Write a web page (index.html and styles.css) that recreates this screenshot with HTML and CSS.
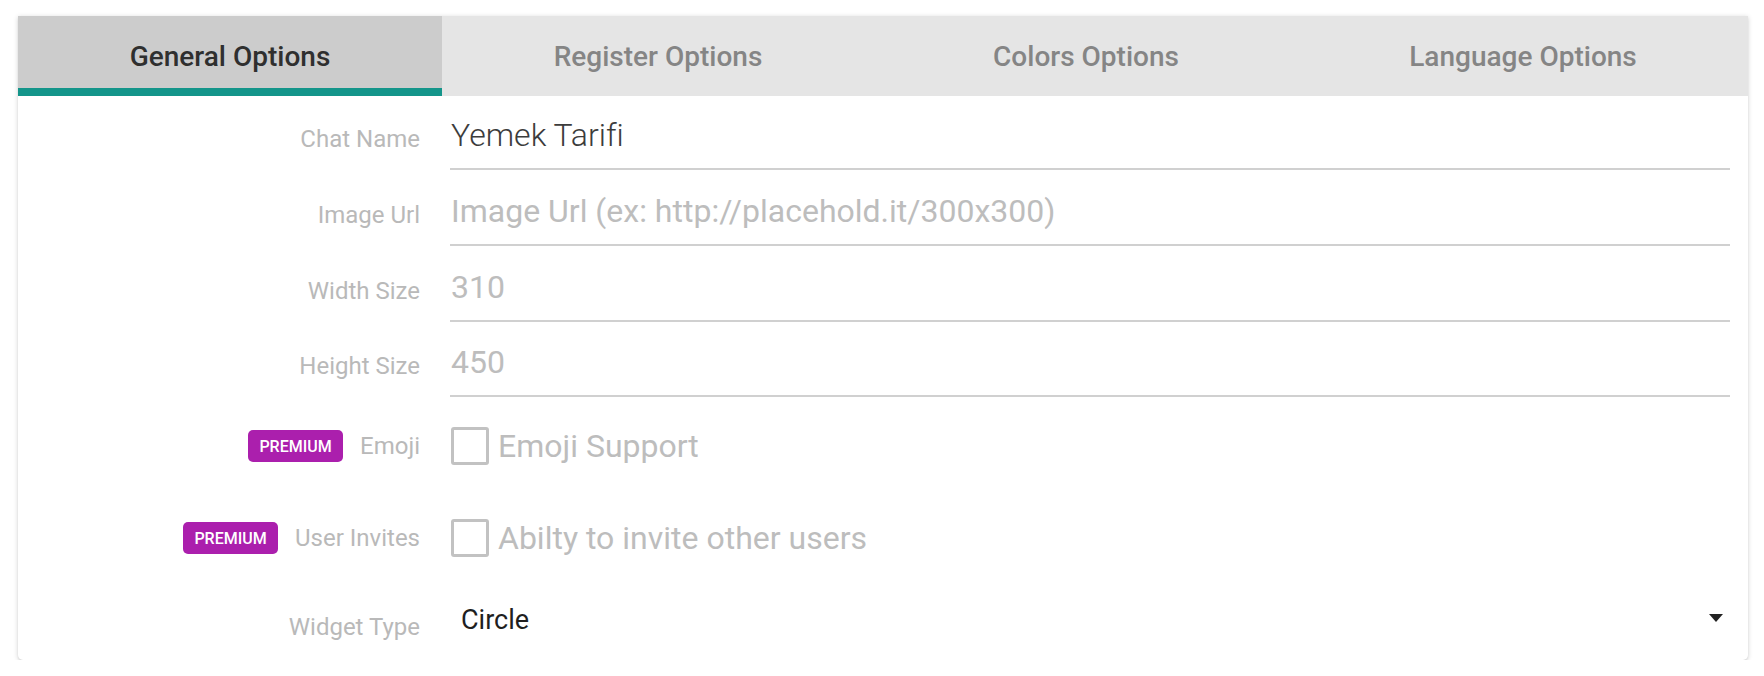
FILE: index.html
```html
<!DOCTYPE html>
<html>
<head>
<meta charset="utf-8">
<link rel="stylesheet" href="styles.css">
</head>
<body>
<div class="card">
  <div class="tabs">
    <div class="tab active">General Options</div>
    <div class="tab t2">Register Options</div>
    <div class="tab t3">Colors Options</div>
    <div class="tab t4">Language Options</div>
  </div>
  <div class="form">
    <div class="row text-row first">
      <div class="label">Chat Name</div>
      <div class="field"><span class="value">Yemek Tarifi</span></div>
    </div>
    <div class="row text-row">
      <div class="label">Image Url</div>
      <div class="field"><span class="placeholder">Image Url (ex: http://placehold.it/300x300)</span></div>
    </div>
    <div class="row text-row">
      <div class="label">Width Size</div>
      <div class="field"><span class="placeholder">310</span></div>
    </div>
    <div class="row text-row last">
      <div class="label">Height Size</div>
      <div class="field"><span class="placeholder">450</span></div>
    </div>
    <div class="row check-row emoji">
      <div class="label"><span class="badge">PREMIUM</span><span>Emoji</span></div>
      <div class="check"><span class="box"></span><span class="check-text">Emoji Support</span></div>
    </div>
    <div class="row check-row invites">
      <div class="label"><span class="badge">PREMIUM</span><span>User Invites</span></div>
      <div class="check"><span class="box"></span><span class="check-text">Abilty to invite other users</span></div>
    </div>
    <div class="row select-row">
      <div class="label">Widget Type</div>
      <div class="select"><span class="select-value">Circle</span><span class="arrow"></span></div>
    </div>
  </div>
</div>
</body>
</html>
```

FILE: styles.css
```css
* { box-sizing: border-box; }
html, body { margin: 0; padding: 0; background: #ffffff; }
body {
  padding: 16px 16px 0 18px;
  font-family: Roboto, "Liberation Sans", sans-serif;
  font-variant-ligatures: none;
}
.card {
  width: 1730px;
  height: 644px;
  background: #fff;
  border-radius: 0 0 5px 5px;
  box-shadow: 0 1px 5px rgba(0,0,0,0.18), 0 2px 2px rgba(0,0,0,0.06);
  overflow: hidden;
}
.tabs {
  display: flex;
  height: 80px;
}
.tab {
  display: flex;
  align-items: center;
  justify-content: center;
  height: 80px;
  padding-top: 8px;
  border-bottom: 8px solid transparent;
  background: #e5e5e5;
  color: #858585;
  font-size: 28px;
  font-weight: 500;
}
.tab.active {
  flex: 0 0 424px;
  background: #cccccc;
  color: #2f2f2f;
  border-bottom-color: #14958a;
}
.tab.t2 { flex: 0 0 432px; }
.tab.t3 { flex: 0 0 424px; }
.tab.t4 { flex: 1; }
.form {
  padding-right: 18px;
}
.row {
  display: grid;
  grid-template-columns: 402px 1fr;
  column-gap: 30px;
  align-items: center;
}
.label {
  display: flex;
  justify-content: flex-end;
  align-items: center;
  gap: 17px;
  color: #b9b9b9;
  font-size: 24px;
}
.text-row {
  height: 76px;
}
.text-row.first { height: 74px; }
.text-row.last { height: 75px; }
.text-row .label {
  align-self: end;
  padding-bottom: 17px;
}
.field {
  align-self: stretch;
  display: flex;
  align-items: flex-end;
  padding-left: 1px;
  padding-bottom: 14px;
  border-bottom: 2px solid #d0d0d0;
}
.value {
  font-size: 32px;
  font-weight: 300;
  color: #3c3c3c;
}
.placeholder {
  font-size: 32px;
  color: #bdbdbd;
}
.check-row.emoji { height: 96px; padding-top: 2px; }
.check-row.invites { height: 90px; }
.badge {
  display: inline-flex;
  align-items: center;
  justify-content: center;
  width: 95px;
  height: 32px;
  border-radius: 5px;
  background: #ab1fad;
  color: #fff;
  font-size: 16px;
  font-weight: 500;
}
.check {
  display: flex;
  align-items: center;
  gap: 9px;
  padding-left: 1px;
}
.box {
  width: 38px;
  height: 38px;
  border: 3px solid #c2c2c2;
  border-radius: 3px;
}
.check-text {
  font-size: 32px;
  color: #bdbdbd;
}
.select-row {
  height: 77px;
}
.select-row .label {
  padding-top: 10px;
}
.select {
  display: flex;
  align-items: center;
  justify-content: space-between;
  padding: 0 7px 3px 11px;
}
.select-value {
  font-size: 27px;
  color: #1f1f1f;
}
.arrow {
  width: 0;
  height: 0;
  margin-bottom: 4px;
  border-left: 7.5px solid transparent;
  border-right: 7.5px solid transparent;
  border-top: 8px solid #222;
}
```
